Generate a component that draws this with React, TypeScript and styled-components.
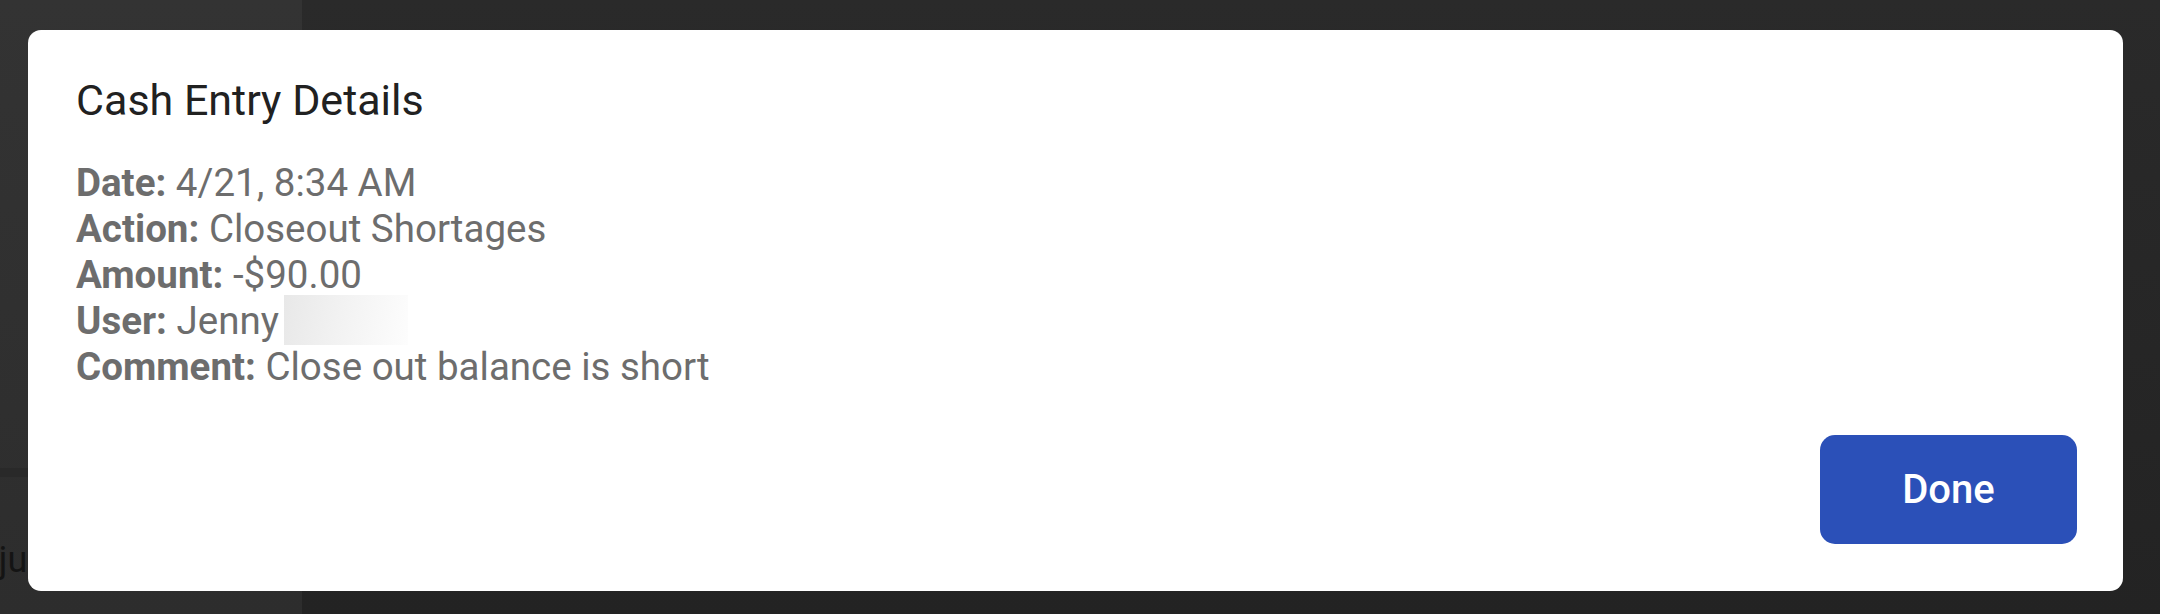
import React from 'react';
import styled, {createGlobalStyle} from 'styled-components';

const GlobalStyle = createGlobalStyle`
  html, body {
    margin: 0;
    padding: 0;
    background: #282828;
    font-family: Roboto, "Noto Sans", "Liberation Sans", sans-serif;
  }
`;

const Screen = styled.div`
  position: relative;
  width: 2160px;
  height: 614px;
  overflow: hidden;
  display: grid;
  grid-template-columns: 302px 1fr;
`;

const Sidebar = styled.div`
  background: linear-gradient(180deg, #333333 0%, #2d2d2d 100%);
  display: flex;
  flex-direction: column;
  padding-top: 468px;
`;

const SideDivider = styled.div`
  height: 9px;
  background: #292929;
`;

const SideItem = styled.div`
  margin-top: 62px;
  font-size: 36px;
  color: #141414;
  white-space: nowrap;
  text-indent: -45px;
  overflow: hidden;
`;

const Main = styled.div`
  background: linear-gradient(180deg, #2a2a2a 0%, #232323 100%);
`;

const Overlay = styled.div`
  position: absolute;
  inset: 0;
  display: flex;
  align-items: flex-start;
  padding: 30px 37px 23px 28px;
`;

const Dialog = styled.div`
  flex: 1;
  height: 561px;
  box-sizing: border-box;
  background: #ffffff;
  border-radius: 13px;
  padding: 45px 46px 47px 48px;
  display: flex;
  flex-direction: column;
`;

const Title = styled.h2`
  margin: 0;
  font-size: 43px;
  font-weight: 400;
  line-height: normal;
  color: #212121;
`;

const Details = styled.div`
  margin-top: 35px;
  display: flex;
  flex-direction: column;
`;

const Line = styled.div`
  font-size: 38.5px;
  line-height: 46px;
  color: #6d6d6d;
  white-space: nowrap;
`;

const Label = styled.b`
  font-weight: 700;
`;

const Redacted = styled.span`
  display: inline-block;
  vertical-align: top;
  width: 124px;
  height: 50px;
  margin: -3px 0 -1px 5px;
  background: linear-gradient(100deg, #e8e8e8 0%, #f2f2f2 45%, #fdfdfd 100%);
`;

const Footer = styled.div`
  margin-top: auto;
  display: flex;
  justify-content: flex-end;
`;

const DoneButton = styled.button`
  width: 257px;
  height: 109px;
  border: none;
  border-radius: 15px;
  background: #2b50b8;
  color: #ffffff;
  font-family: inherit;
  font-size: 40px;
  font-weight: 500;
  cursor: pointer;
`;

type Detail = {label: string, value: string, redact?: boolean};

const details: Detail[] = [
    {label: 'Date:', value: '4/21, 8:34 AM'},
    {label: 'Action:', value: 'Closeout Shortages'},
    {label: 'Amount:', value: '-$90.00'},
    {label: 'User:', value: 'Jenny', redact: true},
    {label: 'Comment:', value: 'Close out balance is short'},
];

export default function App() {
    return (
        <>
            <GlobalStyle/>
            <Screen>
                <Sidebar>
                    <SideDivider/>
                    <SideItem>Adjustments</SideItem>
                </Sidebar>
                <Main/>
                <Overlay>
                    <Dialog>
                        <Title>Cash Entry Details</Title>
                        <Details>
                            {details.map(d => (
                                <Line key={d.label}>
                                    <Label>{d.label}</Label> {d.value}
                                    {d.redact && <Redacted/>}
                                </Line>
                            ))}
                        </Details>
                        <Footer>
                            <DoneButton>Done</DoneButton>
                        </Footer>
                    </Dialog>
                </Overlay>
            </Screen>
        </>
    );
}
